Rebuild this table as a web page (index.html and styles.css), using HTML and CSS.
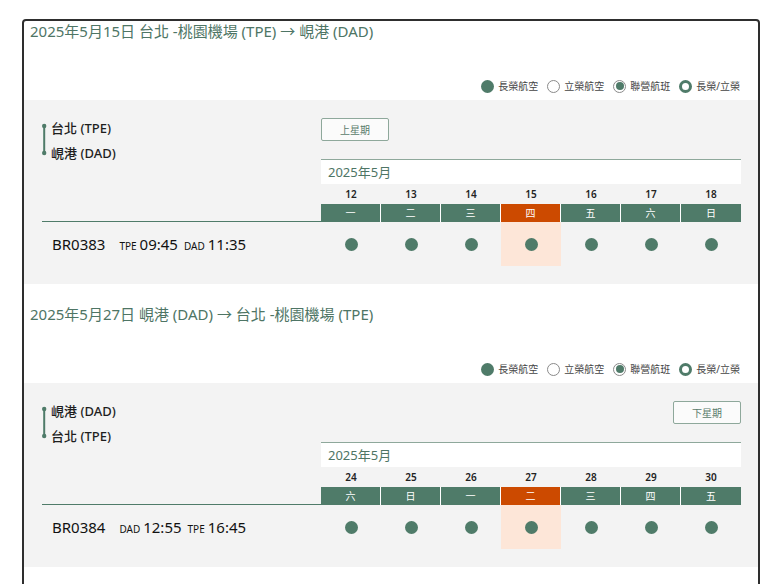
FILE: index.html
```html
<!DOCTYPE html>
<html lang="zh-Hant">
<head>
<meta charset="utf-8">
<title>航班時刻</title>
<link rel="stylesheet" href="styles.css">
</head>
<body>
<div class="frame">

  <section class="leg">
    <h2 class="leg-title">2025年5月15日 台北 -桃園機場 (TPE) → 峴港 (DAD)</h2>
    <div class="legend">
      <span class="lg-item"><i class="lg lg-br"></i>長榮航空</span>
      <span class="lg-item"><i class="lg lg-b7"></i>立榮航空</span>
      <span class="lg-item"><i class="lg lg-code"><b></b></i>聯營航班</span>
      <span class="lg-item"><i class="lg lg-both"></i>長榮/立榮</span>
    </div>
    <div class="panel">
      <div class="top">
        <div class="route-col">
          <div class="route">
            <svg class="route-line" width="9" height="50" viewBox="0 0 9 50"><line x1="2.2" y1="10" x2="2.2" y2="37" stroke="#4f7b69" stroke-width="2"/><circle cx="2.2" cy="10" r="2.2" fill="#4f7b69"/><circle cx="2.2" cy="37" r="2.2" fill="#4f7b69"/></svg>
            <div class="route-names">
              <div>台北 (TPE)</div>
              <div>峴港 (DAD)</div>
            </div>
          </div>
        </div>
        <div class="cal-col">
          <div class="btn-row"><button class="week-btn">上星期</button></div>
          <div class="month">2025年5月</div>
          <div class="dates"><span>12</span><span>13</span><span>14</span><span>15</span><span>16</span><span>17</span><span>18</span></div>
          <div class="days"><span>一</span><span>二</span><span>三</span><span class="on">四</span><span>五</span><span>六</span><span>日</span></div>
        </div>
      </div>
      <div class="flight">
        <div class="flight-info"><span class="fno">BR0383</span><span class="ap">TPE</span><span class="tm">09:45</span><span class="ap">DAD</span><span class="tm">11:35</span></div>
        <div class="marks"><span><i class="dot"></i></span><span><i class="dot"></i></span><span><i class="dot"></i></span><span class="on"><i class="dot"></i></span><span><i class="dot"></i></span><span><i class="dot"></i></span><span><i class="dot"></i></span></div>
      </div>
    </div>
  </section>

  <section class="leg leg-return">
    <h2 class="leg-title">2025年5月27日 峴港 (DAD) → 台北 -桃園機場 (TPE)</h2>
    <div class="legend">
      <span class="lg-item"><i class="lg lg-br"></i>長榮航空</span>
      <span class="lg-item"><i class="lg lg-b7"></i>立榮航空</span>
      <span class="lg-item"><i class="lg lg-code"><b></b></i>聯營航班</span>
      <span class="lg-item"><i class="lg lg-both"></i>長榮/立榮</span>
    </div>
    <div class="panel">
      <div class="top">
        <div class="route-col">
          <div class="route">
            <svg class="route-line" width="9" height="50" viewBox="0 0 9 50"><line x1="2.2" y1="10" x2="2.2" y2="37" stroke="#4f7b69" stroke-width="2"/><circle cx="2.2" cy="10" r="2.2" fill="#4f7b69"/><circle cx="2.2" cy="37" r="2.2" fill="#4f7b69"/></svg>
            <div class="route-names">
              <div>峴港 (DAD)</div>
              <div>台北 (TPE)</div>
            </div>
          </div>
        </div>
        <div class="cal-col">
          <div class="btn-row btn-row-end"><button class="week-btn">下星期</button></div>
          <div class="month">2025年5月</div>
          <div class="dates"><span>24</span><span>25</span><span>26</span><span>27</span><span>28</span><span>29</span><span>30</span></div>
          <div class="days"><span>六</span><span>日</span><span>一</span><span class="on">二</span><span>三</span><span>四</span><span>五</span></div>
        </div>
      </div>
      <div class="flight">
        <div class="flight-info"><span class="fno">BR0384</span><span class="ap">DAD</span><span class="tm">12:55</span><span class="ap">TPE</span><span class="tm">16:45</span></div>
        <div class="marks"><span><i class="dot"></i></span><span><i class="dot"></i></span><span><i class="dot"></i></span><span class="on"><i class="dot"></i></span><span><i class="dot"></i></span><span><i class="dot"></i></span><span><i class="dot"></i></span></div>
      </div>
    </div>
  </section>

</div>
</body>
</html>
```

FILE: styles.css
```css
* { box-sizing: border-box; }

html, body {
  margin: 0;
  padding: 0;
  background: #fff;
}

body {
  font-family: "Noto Sans", "Noto Sans CJK TC", sans-serif;
  color: #222;
}

.frame {
  margin: 19px 0 0 22px;
  width: 738px;
  border: 2px solid #2e2e2e;
  border-radius: 4px;
  padding-bottom: 60px;
}

.leg-title {
  margin: 0;
  padding-left: 6px;
  font-size: 15px;
  line-height: 20px;
  font-weight: 400;
  color: #4e7565;
}

.leg-return { margin-top: 20px; }

.legend {
  display: flex;
  justify-content: flex-end;
  align-items: center;
  gap: 9px;
  height: 14px;
  margin: 38px 0 7px;
  padding-right: 18px;
  font-size: 10px;
  line-height: 14px;
  color: #444;
}

.lg-item {
  display: flex;
  align-items: center;
  gap: 4px;
}

.lg {
  width: 13px;
  height: 13px;
  border-radius: 50%;
  display: flex;
  align-items: center;
  justify-content: center;
}

.lg-br { background: #4f7b69; }
.lg-b7 { border: 1px solid #8a8a8a; background: #fff; }
.lg-code { border: 1px solid #8a8a8a; background: #fff; }
.lg-code b { width: 8px; height: 8px; border-radius: 50%; background: #4f7b69; }
.lg-both { border: 3px solid #4f7b69; background: #fff; }

.panel {
  background: #f3f3f3;
  padding: 0 17px 18px 18px;
}

.top {
  display: flex;
}

.route-col {
  width: 279px;
  padding-top: 16px;
  border-bottom: 1px solid #4f7b69;
}

.route {
  display: flex;
}

.route-line { display: block; flex: none; }

.route-names {
  font-size: 13px;
  line-height: 25px;
  font-weight: 500;
  color: #1e1e1e;
}

.cal-col {
  width: 420px;
  padding-top: 18px;
}

.btn-row {
  display: flex;
  height: 23px;
  margin-bottom: 18px;
}

.btn-row-end { justify-content: flex-end; }

.week-btn {
  width: 68px;
  height: 23px;
  padding: 0;
  border: 1px solid #8ea89b;
  border-radius: 2px;
  background: #fbfbfb;
  font-family: inherit;
  font-size: 10px;
  color: #5a7b6c;
}

.month {
  height: 25px;
  border-top: 1px solid #8ea89b;
  background: #fff;
  padding-left: 7px;
  font-size: 13px;
  line-height: 24px;
  color: #4e7565;
}

.dates, .days, .marks {
  display: grid;
  grid-template-columns: repeat(7, 60px);
}

.dates span {
  height: 20px;
  line-height: 20px;
  text-align: center;
  font-size: 10px;
  font-weight: 600;
  color: #222;
}

.days span {
  height: 18px;
  line-height: 18px;
  text-align: center;
  font-size: 10px;
  color: #fff;
  background: #4f7b69;
  border-right: 1px solid #fff;
}

.days span:last-child { border-right: 0; }
.days span.on { background: #cc4a00; }

.flight {
  display: flex;
}

.flight-info {
  width: 279px;
  padding-left: 10px;
  display: flex;
  align-items: baseline;
  padding-top: 12px;
  color: #111;
}

.fno {
  font-size: 15px;
  margin-right: 14px;
}

.ap {
  font-size: 10px;
  margin-right: 3px;
}

.tm {
  font-size: 15px;
  margin-right: 6px;
}

.marks span {
  height: 44px;
  display: flex;
  align-items: center;
  justify-content: center;
}

.marks span.on { background: #fde6d8; }

.dot {
  width: 13px;
  height: 13px;
  border-radius: 50%;
  background: #4f7b69;
}
```
